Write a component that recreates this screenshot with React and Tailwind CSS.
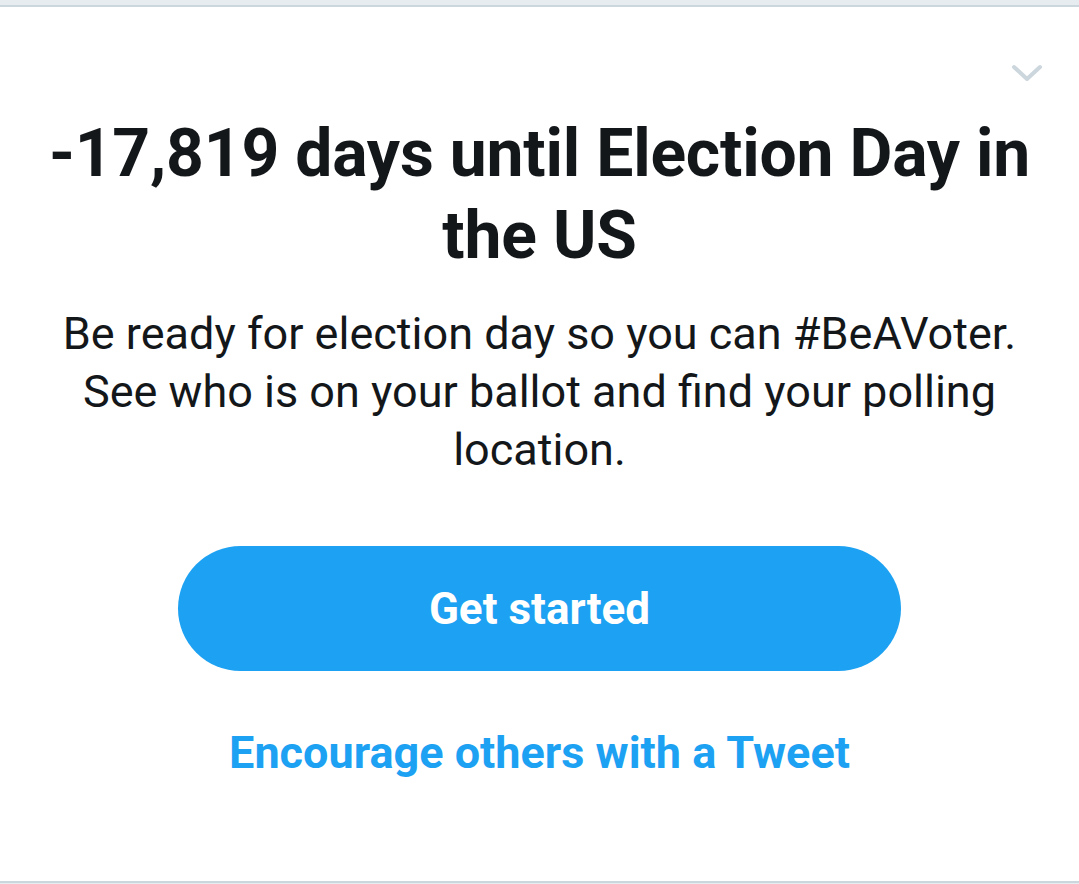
export default function App() {
  return (
    <div className="w-[1079px] h-[884px] bg-[#e6ecf0] flex flex-col font-['Roboto',sans-serif] overflow-hidden">
      <div className="h-[5px] shrink-0" />
      <div className="relative flex-1 bg-white border-t-2 border-b-2 border-[#ccd6dd] flex flex-col items-center px-[40px]">
        <button className="absolute right-[31px] top-[52px] p-1" title="More">
          <svg width="34" height="22" viewBox="0 0 34 22" fill="none">
            <path d="M4 4 L17 16 L30 4" stroke="#ccd6dd" strokeWidth="4" strokeLinecap="round" strokeLinejoin="round" />
          </svg>
        </button>

        <h1 className="mt-[106px] text-center text-[66px] leading-[82px] font-bold text-[#14171a] tracking-[-0.2px]">
          -17,819 days until Election Day in the US
        </h1>

        <p className="mt-[28px] text-center text-[45px] leading-[58px] text-[#14171a]">
          Be ready for election day so you can #BeAVoter. See who is on your ballot and find your polling location.
        </p>

        <button className="mt-[67px] w-[723px] h-[125px] shrink-0 rounded-full bg-[#1da1f2] text-white text-[44px] font-bold flex items-center justify-center">
          Get started
        </button>

        <a href="#" className="mt-[56px] text-[45px] leading-[52px] font-bold text-[#1da1f2]">
          Encourage others with a Tweet
        </a>
      </div>
      <div className="h-[1px] shrink-0" />
    </div>
  );
}
